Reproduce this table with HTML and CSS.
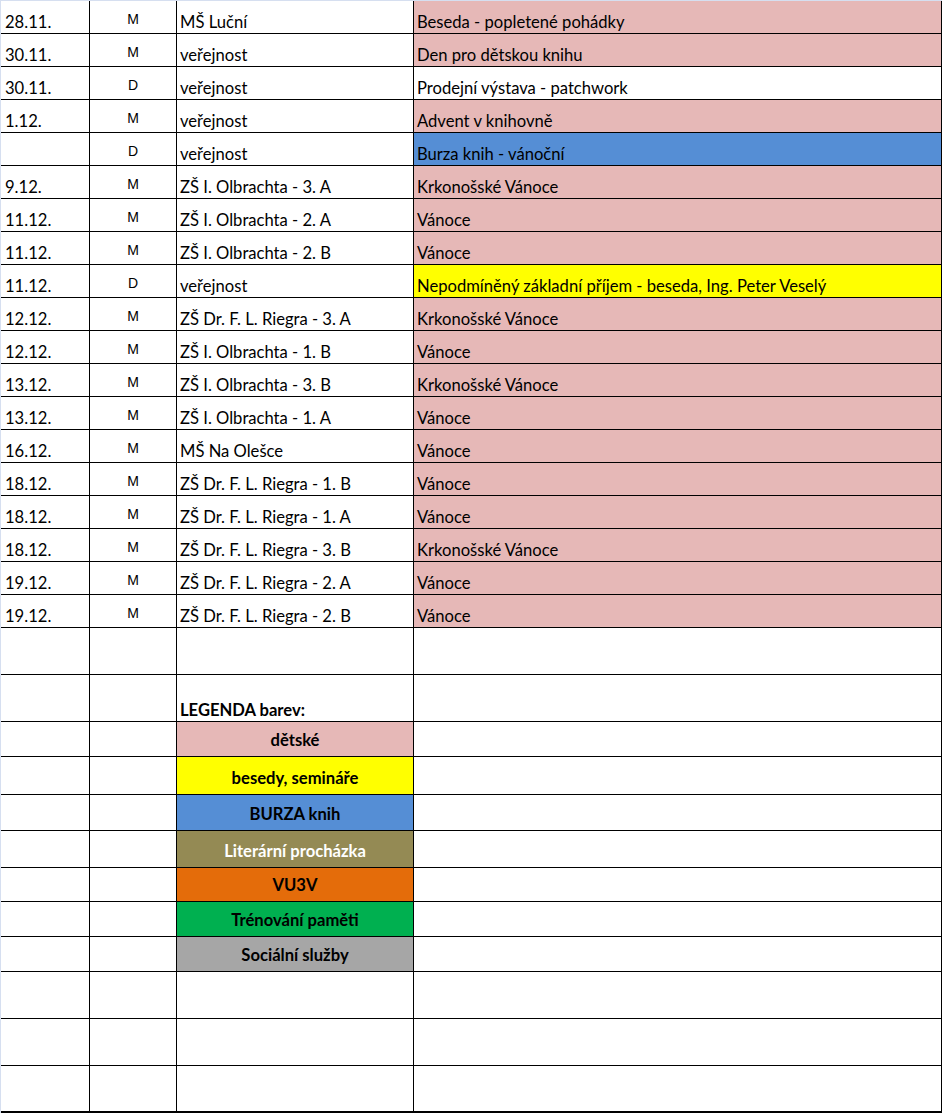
FILE: index.html
```html
<!DOCTYPE html>
<html lang="cs">
<head>
<meta charset="utf-8">
<title>Akce knihovny</title>
<link rel="stylesheet" href="styles.css">
</head>
<body>
<div class="sheet">
  <div class="row"><div class="c date">28.11.</div><div class="c type">M</div><div class="c who">MŠ Luční</div><div class="c what pink">Beseda - popletené pohádky</div></div>
  <div class="row"><div class="c date">30.11.</div><div class="c type">M</div><div class="c who">veřejnost</div><div class="c what pink">Den pro dětskou knihu</div></div>
  <div class="row"><div class="c date">30.11.</div><div class="c type">D</div><div class="c who">veřejnost</div><div class="c what">Prodejní výstava - patchwork</div></div>
  <div class="row"><div class="c date">1.12.</div><div class="c type">M</div><div class="c who">veřejnost</div><div class="c what pink">Advent v knihovně</div></div>
  <div class="row"><div class="c date"></div><div class="c type">D</div><div class="c who">veřejnost</div><div class="c what blue">Burza knih - vánoční</div></div>
  <div class="row"><div class="c date">9.12.</div><div class="c type">M</div><div class="c who">ZŠ I. Olbrachta - 3. A</div><div class="c what pink">Krkonošské Vánoce</div></div>
  <div class="row"><div class="c date">11.12.</div><div class="c type">M</div><div class="c who">ZŠ I. Olbrachta - 2. A</div><div class="c what pink">Vánoce</div></div>
  <div class="row"><div class="c date">11.12.</div><div class="c type">M</div><div class="c who">ZŠ I. Olbrachta - 2. B</div><div class="c what pink">Vánoce</div></div>
  <div class="row"><div class="c date">11.12.</div><div class="c type">D</div><div class="c who">veřejnost</div><div class="c what yellow">Nepodmíněný základní příjem - beseda, Ing. Peter Veselý</div></div>
  <div class="row"><div class="c date">12.12.</div><div class="c type">M</div><div class="c who">ZŠ Dr. F. L. Riegra - 3. A</div><div class="c what pink">Krkonošské Vánoce</div></div>
  <div class="row"><div class="c date">12.12.</div><div class="c type">M</div><div class="c who">ZŠ I. Olbrachta - 1. B</div><div class="c what pink">Vánoce</div></div>
  <div class="row"><div class="c date">13.12.</div><div class="c type">M</div><div class="c who">ZŠ I. Olbrachta - 3. B</div><div class="c what pink">Krkonošské Vánoce</div></div>
  <div class="row"><div class="c date">13.12.</div><div class="c type">M</div><div class="c who">ZŠ I. Olbrachta - 1. A</div><div class="c what pink">Vánoce</div></div>
  <div class="row"><div class="c date">16.12.</div><div class="c type">M</div><div class="c who">MŠ Na Olešce</div><div class="c what pink">Vánoce</div></div>
  <div class="row"><div class="c date">18.12.</div><div class="c type">M</div><div class="c who">ZŠ Dr. F. L. Riegra - 1. B</div><div class="c what pink">Vánoce</div></div>
  <div class="row"><div class="c date">18.12.</div><div class="c type">M</div><div class="c who">ZŠ Dr. F. L. Riegra - 1. A</div><div class="c what pink">Vánoce</div></div>
  <div class="row"><div class="c date">18.12.</div><div class="c type">M</div><div class="c who">ZŠ Dr. F. L. Riegra - 3. B</div><div class="c what pink">Krkonošské Vánoce</div></div>
  <div class="row"><div class="c date">19.12.</div><div class="c type">M</div><div class="c who">ZŠ Dr. F. L. Riegra - 2. A</div><div class="c what pink">Vánoce</div></div>
  <div class="row"><div class="c date">19.12.</div><div class="c type">M</div><div class="c who">ZŠ Dr. F. L. Riegra - 2. B</div><div class="c what pink">Vánoce</div></div>

  <div class="row tall"><div class="c"></div><div class="c"></div><div class="c"></div><div class="c"></div></div>
  <div class="row tall"><div class="c"></div><div class="c"></div><div class="c who legend-title">LEGENDA barev:</div><div class="c"></div></div>

  <div class="row h35"><div class="c"></div><div class="c"></div><div class="c key pink">dětské</div><div class="c"></div></div>
  <div class="row h38"><div class="c"></div><div class="c"></div><div class="c key yellow">besedy, semináře</div><div class="c"></div></div>
  <div class="row h36"><div class="c"></div><div class="c"></div><div class="c key blue">BURZA knih</div><div class="c"></div></div>
  <div class="row h37"><div class="c"></div><div class="c"></div><div class="c key olive">Literární procházka</div><div class="c"></div></div>
  <div class="row h34"><div class="c"></div><div class="c"></div><div class="c key orange">VU3V</div><div class="c"></div></div>
  <div class="row h35"><div class="c"></div><div class="c"></div><div class="c key green">Trénování paměti</div><div class="c"></div></div>
  <div class="row h35"><div class="c"></div><div class="c"></div><div class="c key gray">Sociální služby</div><div class="c"></div></div>

  <div class="row tall"><div class="c"></div><div class="c"></div><div class="c"></div><div class="c"></div></div>
  <div class="row tall"><div class="c"></div><div class="c"></div><div class="c"></div><div class="c"></div></div>
  <div class="row tall last"><div class="c"></div><div class="c"></div><div class="c"></div><div class="c"></div></div>
</div>
</body>
</html>
```

FILE: styles.css
```css
html, body {
  margin: 0;
  padding: 0;
  background: #ffffff;
}

body {
  width: 942px;
  height: 1113px;
  overflow: hidden;
  font-family: "Lato", "Liberation Sans", sans-serif;
  color: #000000;
}

.sheet {
  width: 942px;
  box-sizing: border-box;
  border-top: 1px solid #d6dff0;
  border-left: 1px solid #d6dff0;
}

.row {
  display: grid;
  grid-template-columns: 89px 87px 237px 528px;
  height: 33px;
}

.row.tall { height: 47px; }
.row.h34 { height: 34px; }
.row.h35 { height: 35px; }
.row.h36 { height: 36px; }
.row.h37 { height: 37px; }
.row.h38 { height: 38px; }

.c {
  box-sizing: border-box;
  border-right: 1px solid #000000;
  border-bottom: 1px solid #000000;
  display: flex;
  align-items: flex-end;
  padding: 0 0 3px 3px;
  font-size: 16.6px;
  line-height: 16px;
  white-space: nowrap;
  overflow: hidden;
}

.row.last .c {
  border-bottom-width: 2px;
}

.date { padding-left: 4px; }

.c.type {
  justify-content: center;
  padding-left: 0;
  padding-bottom: 7px;
  font-family: "Liberation Sans", Arial, sans-serif;
  font-size: 14px;
  line-height: 14px;
}

.legend-title {
  font-weight: 700;
}

.key {
  justify-content: center;
  padding-left: 0;
  padding-bottom: 8px;
  font-weight: 700;
}

.pink { background: #e6b8b7; }
.yellow { background: #ffff00; }
.blue { background: #558ed5; }
.olive { background: #948a54; color: #ffffff; }
.orange { background: #e46c0a; }
.green { background: #00b050; }
.gray { background: #a6a6a6; }
```
